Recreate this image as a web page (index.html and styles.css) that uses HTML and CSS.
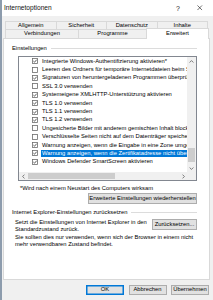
FILE: index.html
```html
<!DOCTYPE html>
<html lang="de">
<head>
<meta charset="utf-8">
<title>Internetoptionen</title>
<link rel="stylesheet" href="styles.css">
</head>
<body>
<svg class="defs" width="0" height="0" aria-hidden="true">
  <symbol id="cb-off" viewBox="0 0 6 6"><rect x="0.5" y="0.5" width="5" height="5" fill="#fff" stroke="#6d6d6d" stroke-width="0.8"/></symbol>
  <symbol id="cb-on" viewBox="0 0 6 6"><rect x="0.5" y="0.5" width="5" height="5" fill="#fff" stroke="#6d6d6d" stroke-width="0.8"/><path d="M1.4 3.1 L2.5 4.2 L4.7 1.7" fill="none" stroke="#333" stroke-width="0.8"/></symbol>
</svg>
<div class="win">
  <header class="titlebar">
    <span class="title">Internetoptionen</span>
    <span class="help">?</span>
    <span class="close"><svg viewBox="0 0 6 6" width="5.5" height="5.5"><path d="M0.5 0.5 L5.5 5.5 M5.5 0.5 L0.5 5.5" stroke="#222" stroke-width="0.7" fill="none"/></svg></span>
  </header>
  <div class="body">
    <div class="tabrow top">
      <div class="tab">Allgemein</div>
      <div class="tab">Sicherheit</div>
      <div class="tab">Datenschutz</div>
      <div class="tab">Inhalte</div>
    </div>
    <div class="tabrow second">
      <div class="tab t-verb">Verbindungen</div>
      <div class="tab t-prog">Programme</div>
      <div class="tab t-sel">Erweitert</div>
    </div>
    <div class="panel">
      <div class="group g1">
        <div class="glabel"><span>Einstellungen</span><span class="rule"></span></div>
        <div class="listbox">
          <div class="lb-main">
            <ul class="items">
              <li class="item"><svg class="cb"><use href="#cb-on"/></svg><span class="lbl">Integrierte Windows-Authentifizierung aktivieren*</span></li>
              <li class="item"><svg class="cb"><use href="#cb-off"/></svg><span class="lbl">Leeren des Ordners für temporäre Internetdateien beim Schließen des Browsers</span></li>
              <li class="item"><svg class="cb"><use href="#cb-on"/></svg><span class="lbl">Signaturen von heruntergeladenen Programmen überprüfen</span></li>
              <li class="item"><svg class="cb"><use href="#cb-off"/></svg><span class="lbl">SSL 3.0 verwenden</span></li>
              <li class="item"><svg class="cb"><use href="#cb-on"/></svg><span class="lbl">Systemeigene XMLHTTP-Unterstützung aktivieren</span></li>
              <li class="item"><svg class="cb"><use href="#cb-on"/></svg><span class="lbl">TLS 1.0 verwenden</span></li>
              <li class="item"><svg class="cb"><use href="#cb-on"/></svg><span class="lbl">TLS 1.1 verwenden</span></li>
              <li class="item"><svg class="cb"><use href="#cb-on"/></svg><span class="lbl">TLS 1.2 verwenden</span></li>
              <li class="item"><svg class="cb"><use href="#cb-off"/></svg><span class="lbl">Ungesicherte Bilder mit anderem gemischten Inhalt blockieren</span></li>
              <li class="item"><svg class="cb"><use href="#cb-off"/></svg><span class="lbl">Verschlüsselte Seiten nicht auf dem Datenträger speichern</span></li>
              <li class="item"><svg class="cb"><use href="#cb-on"/></svg><span class="lbl">Warnung anzeigen, wenn die Eingabe in eine Zone umgeleitet wird, die keine Eingabe zulässt</span></li>
              <li class="item"><svg class="cb"><use href="#cb-on"/></svg><span class="lbl sel">Warnung anzeigen, wenn die Zertifikatadresse nicht übereinstimmt*</span></li>
              <li class="item"><svg class="cb"><use href="#cb-on"/></svg><span class="lbl">Windows Defender SmartScreen aktivieren</span></li>
            </ul>
            <div class="vscroll">
              <div class="arr"><svg width="5" height="3" viewBox="0 0 5 3"><path d="M0.6 2.5 L2.5 0.6 L4.4 2.5" fill="none" stroke="#606060" stroke-width="0.8"/></svg></div>
              <div class="vtrack"><div class="vthumb"></div></div>
              <div class="arr"><svg width="5" height="3" viewBox="0 0 5 3"><path d="M0.6 0.5 L2.5 2.4 L4.4 0.5" fill="none" stroke="#606060" stroke-width="0.8"/></svg></div>
            </div>
          </div>
          <div class="hscroll">
            <div class="harr"><svg width="3" height="5" viewBox="0 0 3 5"><path d="M2.5 0.6 L0.6 2.5 L2.5 4.4" fill="none" stroke="#606060" stroke-width="0.8"/></svg></div>
            <div class="htrack"><div class="hthumb"></div></div>
            <div class="harr"><svg width="3" height="5" viewBox="0 0 3 5"><path d="M0.5 0.6 L2.4 2.5 L0.5 4.4" fill="none" stroke="#606060" stroke-width="0.8"/></svg></div>
            <div class="corner"></div>
          </div>
        </div>
        <p class="note">*Wird nach einem Neustart des Computers wirksam</p>
        <div class="btnrow"><button class="btn wide">Erweiterte Einstellungen wiederherstellen</button></div>
      </div>
      <div class="group g2">
        <div class="glabel"><span>Internet Explorer-Einstellungen zurücksetzen</span><span class="rule"></span></div>
        <div class="reset-row">
          <p class="desc"><span>Setzt die Einstellungen von Internet Explorer in den</span><span>Standardzustand zurück.</span></p>
          <button class="btn reset">Zurücksetzen...</button>
        </div>
        <p class="desc warn"><span>Sie sollten dies nur verwenden, wenn sich der Browser in einem nicht</span><span>mehr verwendbaren Zustand befindet.</span></p>
      </div>
    </div>
    <div class="footer">
      <button class="btn dlg default">OK</button>
      <button class="btn dlg">Abbrechen</button>
      <button class="btn dlg">Übernehmen</button>
    </div>
  </div>
</div>
</body>
</html>
```
FILE: styles.css
```css
* { box-sizing: border-box; }
html, body { margin: 0; padding: 0; }
body {
  width: 213px;
  height: 300px;
  overflow: hidden;
  font-family: "Liberation Sans", Arial, sans-serif;
  font-size: 5.8px;
  color: #000;
  background: #f0f0f0;
}
.defs { position: absolute; width: 0; height: 0; overflow: hidden; }

.win {
  height: 300px;
  border-left: 2px solid #8d9cad;
  background: #f0f0f0;
  display: flex;
  flex-direction: column;
}
.titlebar {
  height: 16px;
  flex: none;
  background: #fff;
  display: flex;
  align-items: center;
  padding-left: 2px;
}
.title { flex: 1; font-size: 6.6px; line-height: 1; color: #111; }
.help { width: 10px; text-align: center; font-size: 7px; line-height: 1; color: #222; }
.close { width: 10px; margin-left: 12px; margin-right: 8px; display: flex; justify-content: center; }

.body {
  flex: 1;
  padding: 5px 3px 0 1px;
  display: flex;
  flex-direction: column;
}

.tabrow { display: flex; margin: 0 1px 0 2px; flex: none; }
.tabrow.top { height: 8px; margin-right: 2px; }
.tab {
  border: 1px solid #d9d9d9;
  border-bottom: 0;
  border-right: 0;
  background: #f0f0f0;
  display: flex;
  align-items: center;
  justify-content: center;
  white-space: nowrap;
  line-height: 1;
}
.tabrow .tab:last-child { border-right: 1px solid #d9d9d9; }
.top .tab { flex: 1; }
.tabrow.second { height: 9px; align-items: flex-start; }
.second .tab { height: 9px; }
.t-verb { width: 73px; }
.t-prog { width: 68px; }
.second .t-sel {
  width: 63px;
  height: 11px;
  margin-top: -1px;
  background: #fff;
  position: relative;
  z-index: 1;
}

.panel {
  height: 242px;
  flex: none;
  border: 1px solid #d9d9d9;
  background: #fff;
  padding-top: 6px;
}
.group { margin: 0 12px 0 8px; }
.glabel { display: flex; align-items: center; height: 7px; line-height: 7px; white-space: nowrap; }
.rule { flex: 1; height: 1px; background: #dcdcdc; margin-left: 4px; }

.listbox {
  margin: 4px 0 0 6px;
  height: 125px;
  border: 1px solid #828790;
  background: #fff;
  display: flex;
  flex-direction: column;
}
.lb-main { display: flex; height: 115px; flex: none; }
.items { list-style: none; margin: 0; padding: 0; flex: 1; min-width: 0; overflow: hidden; }
.item { height: 8.4px; display: flex; align-items: center; padding-left: 13px; white-space: nowrap; }
.cb { width: 6px; height: 6px; flex: none; margin-right: 3px; }
.lbl { padding: 0 1px; line-height: 7px; }
.lbl.sel { background: #0078d7; color: #fff; }

.vscroll { width: 9px; flex: none; background: #f0f0f0; display: flex; flex-direction: column; }
.arr { height: 8px; flex: none; display: flex; align-items: center; justify-content: center; }
.vtrack { flex: 1; display: flex; flex-direction: column; justify-content: flex-end; padding: 0 1px 2px; }
.vthumb { height: 14px; background: #cdcdcd; }

.hscroll { height: 8px; flex: none; display: flex; background: #f0f0f0; }
.harr { width: 8px; flex: none; display: flex; align-items: center; justify-content: center; }
.htrack { flex: 1; display: flex; padding: 1px 0; }
.hthumb { width: 87px; margin-left: 1px; background: #cdcdcd; }
.corner { width: 9px; flex: none; background: #f0f0f0; }

.note { margin: 3.5px 0 0 8px; line-height: 7px; white-space: nowrap; }
.btnrow { display: flex; justify-content: flex-end; margin-top: 1.5px; }
.btn {
  font-family: inherit;
  font-size: 5.8px;
  color: #000;
  background: #e1e1e1;
  border: 1px solid #adadad;
  border-radius: 0;
  padding: 0;
  line-height: 1;
  white-space: nowrap;
}
.wide { width: 109px; height: 11px; }

.g2 { margin-top: 4.5px; }
.reset-row { display: flex; justify-content: space-between; align-items: flex-start; margin-top: 3px; padding-left: 3px; }
.desc { margin: 0; line-height: 7px; flex: 1; min-width: 0; }
.desc span { display: block; white-space: nowrap; }
.reset { width: 45px; height: 11px; margin-top: 0.5px; flex: none; }
.warn { margin-top: 1px; padding-left: 3px; }

.footer { display: flex; justify-content: flex-end; gap: 4.5px; margin-top: 5px; margin-right: 1px; }
.dlg { width: 38px; height: 10px; }
.default { border-color: #0078d7; box-shadow: inset 0 0 0 0.5px #0078d7; }
```
